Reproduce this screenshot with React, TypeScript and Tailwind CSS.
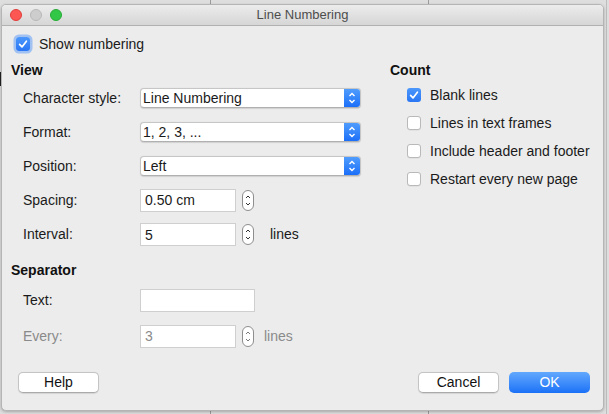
import React from "react";

const font = { fontFamily: '"Liberation Sans", Arial, sans-serif' };

function Check({ checked, focus }: { checked?: boolean; focus?: boolean }) {
  if (checked) {
    return (
      <div
        className={
          "w-[14px] h-[14px] rounded-[3px] bg-gradient-to-b from-[#4b97fb] to-[#2a76f4] flex items-center justify-center shrink-0 " +
          (focus ? "shadow-[0_0_0_2.5px_rgba(110,165,245,0.6)]" : "")
        }
      >
        <svg width="14" height="14" viewBox="0 0 14 14">
          <path d="M3.6 7.4 L6 9.9 L10.4 4.2" fill="none" stroke="white" strokeWidth="1.7" strokeLinecap="round" strokeLinejoin="round" />
        </svg>
      </div>
    );
  }
  return <div className="w-[14px] h-[14px] rounded-[3px] bg-white border border-[#b9b9b9] shrink-0 shadow-[0_0.5px_0.5px_rgba(0,0,0,0.08)]" />;
}

function Select({ value }: { value: string }) {
  return (
    <div className="flex h-[20px] w-[221px] rounded-[4px] bg-white border border-[#c6c6c6] border-b-[#b0b0b0] overflow-hidden shadow-[0_0.5px_1px_rgba(0,0,0,0.12)]">
      <div className="flex-1 flex items-center pl-[2px] text-[14px] text-[#1a1a1a] leading-none">{value}</div>
      <div className="w-[16px] h-full bg-gradient-to-b from-[#4f9cfd] to-[#1b6ff8] flex items-center justify-center">
        <svg width="16" height="20" viewBox="0 0 16 20">
          <path d="M5.5 8 L8 5.5 L10.5 8" fill="none" stroke="white" strokeWidth="1.4" />
          <path d="M5.5 12 L8 14.5 L10.5 12" fill="none" stroke="white" strokeWidth="1.4" />
        </svg>
      </div>
    </div>
  );
}

function Spinner({ disabled }: { disabled?: boolean }) {
  const c = disabled ? "#7a7a7a" : "#333";
  return (
    <div className="w-[12px] h-[21px] rounded-[6px] border border-[#8e8e8e] bg-white flex items-center justify-center">
      <svg width="10" height="19" viewBox="0 0 10 19">
        <path d="M3 7 L5 5 L7 7" fill="none" stroke={c} strokeWidth="1" />
        <path d="M3 12 L5 14 L7 12" fill="none" stroke={c} strokeWidth="1" />
      </svg>
    </div>
  );
}

function Input({ value, w, disabled }: { value: string; w: string; disabled?: boolean }) {
  return (
    <div
      className={
        "h-[23px] bg-white border border-[#cfcfcf] flex items-center pl-[4px] text-[14px] leading-none " +
        w +
        (disabled ? " text-[#8a8a8a]" : " text-[#1a1a1a]")
      }
    >
      {value}
    </div>
  );
}

function Row({ label, children, disabled, h }: { label: string; children: React.ReactNode; disabled?: boolean; h: string }) {
  return (
    <div className={"flex items-center pl-[12px] " + h}>
      <div className={"w-[117px] text-[14px] " + (disabled ? "text-[#8a8a8a]" : "text-[#1a1a1a]")}>{label}</div>
      {children}
    </div>
  );
}

function Btn({ label, primary }: { label: string; primary?: boolean }) {
  return (
    <div
      className={
        "w-[81px] h-[21px] rounded-[5px] flex items-center justify-center text-[14px] " +
        (primary
          ? "bg-gradient-to-b from-[#62a8fd] to-[#1a71f7] text-white"
          : "bg-white border border-[#c4c4c4] border-b-[#aaaaaa] text-[#111] shadow-[0_0.5px_1px_rgba(0,0,0,0.1)]")
      }
    >
      {label}
    </div>
  );
}

export default function App() {
  return (
    <div className="relative w-[609px] h-[414px] overflow-hidden bg-[#dedede]" style={font}>
      <div className="absolute left-[210px] top-0 w-px h-full bg-[#9c9c9c]" />
      <div className="absolute left-[428px] top-0 w-px h-full bg-[#9c9c9c]" />
      <div className="absolute left-[606px] top-0 w-px h-full bg-[#bdbdbd]" />
      <div className="absolute left-0 top-[72px] w-[2px] h-[14px] bg-[#222]" />

      <div className="relative ml-[1px] mt-[4px] w-[603px] h-[407px] rounded-[5px] bg-[#ececec] border border-[#b5b5b5] shadow-[0_1px_3px_rgba(0,0,0,0.25)] flex flex-col overflow-hidden">
        {/* title bar */}
        <div className="relative h-[21px] shrink-0 bg-gradient-to-b from-[#ececec] to-[#d6d6d6] border-b border-[#b1b1b1] flex items-center justify-center">
          <div className="absolute left-[8px] top-[4px] flex gap-[8px]">
            <div className="w-[12px] h-[12px] rounded-full bg-[#fc5753] border border-[#df3e3a]" />
            <div className="w-[12px] h-[12px] rounded-full bg-[#cdcdcd] border border-[#b8b8b8]" />
            <div className="w-[12px] h-[12px] rounded-full bg-[#33c748] border border-[#27aa35]" />
          </div>
          <span className="text-[13px] text-[#4d4d4d]">Line Numbering</span>
        </div>

        {/* show numbering */}
        <div className="h-[36px] flex items-center pl-[14px] gap-[9px]">
          <Check checked focus />
          <span className="text-[14px] text-[#1a1a1a]">Show numbering</span>
        </div>

        <div className="flex pl-[9px]">
          {/* left column */}
          <div className="w-[379px] flex flex-col">
            <div className="h-[16px] flex items-center text-[14px] font-bold text-[#111]">View</div>
            <div className="mt-[3px]">
              <Row label="Character style:" h="h-[34px]">
                <Select value="Line Numbering" />
              </Row>
              <Row label="Format:" h="h-[34px]">
                <Select value="1, 2, 3, ..." />
              </Row>
              <Row label="Position:" h="h-[34px]">
                <Select value="Left" />
              </Row>
              <Row label="Spacing:" h="h-[34px]">
                <Input value="0.50 cm" w="w-[96px]" />
                <div className="ml-[6px]">
                  <Spinner />
                </div>
              </Row>
              <Row label="Interval:" h="h-[35px]">
                <Input value="5" w="w-[96px]" />
                <div className="ml-[6px]">
                  <Spinner />
                </div>
                <span className="ml-[16px] text-[14px] text-[#1a1a1a]">lines</span>
              </Row>
            </div>
            <div className="h-[36px] flex items-center text-[14px] font-bold text-[#111]">Separator</div>
            <Row label="Text:" h="h-[24px]">
              <Input value="" w="w-[115px]" />
            </Row>
            <div className="mt-[12px]">
              <Row label="Every:" h="h-[24px]" disabled>
                <Input value="3" w="w-[96px]" disabled />
                <div className="ml-[6px]">
                  <Spinner disabled />
                </div>
                <span className="ml-[10px] text-[14px] text-[#8a8a8a]">lines</span>
              </Row>
            </div>
          </div>

          {/* right column */}
          <div className="flex flex-col">
            <div className="h-[16px] flex items-center text-[14px] font-bold text-[#111]">Count</div>
            <div className="mt-[3px] pl-[17px]">
              {[
                ["Blank lines", true],
                ["Lines in text frames", false],
                ["Include header and footer", false],
                ["Restart every new page", false],
              ].map(([l, c]) => (
                <div key={l as string} className="h-[28px] flex items-center gap-[9px]">
                  <Check checked={c as boolean} />
                  <span className="text-[14px] text-[#1a1a1a]">{l as string}</span>
                </div>
              ))}
            </div>
          </div>
        </div>

        {/* buttons */}
        <div className="mt-auto mb-[17px] flex items-center pl-[16px] pr-[13px]">
          <Btn label="Help" />
          <div className="flex-1" />
          <Btn label="Cancel" />
          <div className="w-[10px]" />
          <Btn label="OK" primary />
        </div>
      </div>
    </div>
  );
}
